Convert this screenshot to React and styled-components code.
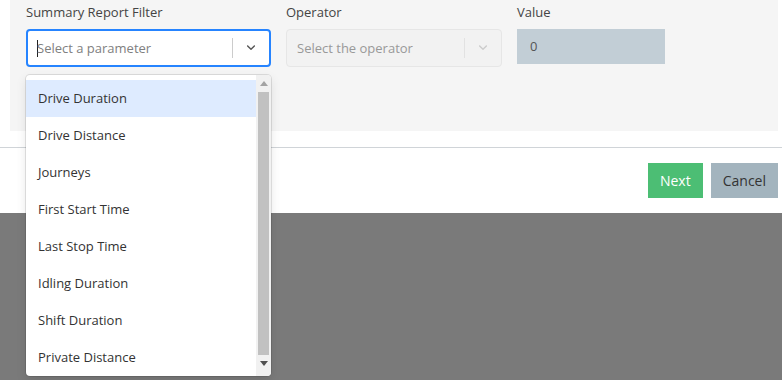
import React from 'react'
import styled, { createGlobalStyle } from 'styled-components'

const Global = createGlobalStyle`
  html, body { margin: 0; padding: 0; }
  body {
    font-family: "Open Sans", "Noto Sans", sans-serif;
    background: #7a7a7a;
  }
  * { box-sizing: border-box; }
`

const options = [
  'Drive Duration',
  'Drive Distance',
  'Journeys',
  'First Start Time',
  'Last Stop Time',
  'Idling Duration',
  'Shift Duration',
  'Private Distance',
]

const Chevron = ({ color }) => (
  <svg width="14" height="14" viewBox="0 0 20 20">
    <path
      fill={color}
      d="M4.5 6.3c.4-.4 1-.4 1.4 0L10 10.4l4.1-4.1c.4-.4 1-.4 1.4 0 .4.4.4 1 0 1.4l-4.8 4.8c-.4.4-1 .4-1.4 0L4.5 7.7c-.4-.4-.4-1 0-1.4z"
    />
  </svg>
)

const App = () => {
  return (
    <>
      <Global />
      <Page>
        <Modal>
          <Body>
            <Panel>
              <Field width={245}>
                <Label>Summary Report Filter</Label>
                <SelectBox focused>
                  <Placeholder>
                    <Caret />
                    Select a parameter
                  </Placeholder>
                  <Separator />
                  <Indicator>
                    <Chevron color="#555" />
                  </Indicator>
                </SelectBox>
                <Menu>
                  <MenuList>
                    {options.map((o, i) => (
                      <Option key={o} active={i === 0}>{o}</Option>
                    ))}
                  </MenuList>
                  <ScrollTrack>
                    <Arrow>
                      <svg width="8" height="5" viewBox="0 0 8 5"><path d="M0 5 L4 0 L8 5 Z" fill="#a3a3a3" /></svg>
                    </Arrow>
                    <Thumb />
                    <Arrow>
                      <svg width="8" height="5" viewBox="0 0 8 5"><path d="M0 0 L8 0 L4 5 Z" fill="#505050" /></svg>
                    </Arrow>
                  </ScrollTrack>
                </Menu>
              </Field>
              <Field width={216}>
                <Label>Operator</Label>
                <SelectBox disabled>
                  <Placeholder disabled>Select the operator</Placeholder>
                  <Separator disabled />
                  <Indicator>
                    <Chevron color="#cccccc" />
                  </Indicator>
                </SelectBox>
              </Field>
              <Field width={148}>
                <Label>Value</Label>
                <ValueInput>0</ValueInput>
              </Field>
            </Panel>
          </Body>
          <Footer>
            <Button kind="primary">Next</Button>
            <Button>Cancel</Button>
          </Footer>
        </Modal>
        <Backdrop />
      </Page>
    </>
  )
}

const Page = styled.div`
  width: 782px;
  height: 380px;
  display: flex;
  flex-direction: column;
  position: relative;
`

const Modal = styled.div`
  width: 782px;
  background: #fff;
  position: relative;
  z-index: 2;
`

const Backdrop = styled.div`
  flex: 1;
  background: #7a7a7a;
  position: relative;
  z-index: 1;
`

const Body = styled.div`
  padding: 0 4px 16px 10px;
`

const Panel = styled.div`
  background: #f5f5f5;
  height: 131px;
  padding: 3px 16px 0;
  display: flex;
  gap: 15px;
`

const Field = styled.div`
  width: ${p => p.width}px;
  position: relative;
`

const Label = styled.div`
  font-size: 13px;
  color: #444;
  line-height: 18px;
  height: 26px;
`

const SelectBox = styled.div`
  height: 38px;
  display: flex;
  align-items: center;
  border-radius: 4px;
  background: ${p => (p.disabled ? '#f2f2f2' : '#fff')};
  border: ${p => (p.focused ? '2px solid #2684ff' : '1px solid #e6e6e6')};
  padding-left: ${p => (p.focused ? '9px' : '10px')};
`

const Placeholder = styled.div`
  flex: 1;
  display: flex;
  align-items: center;
  font-size: 13px;
  color: ${p => (p.disabled ? '#999' : '#808080')};
`

const Caret = styled.span`
  display: inline-block;
  width: 1px;
  height: 17px;
  background: #222;
  margin-right: -1px;
`

const Separator = styled.span`
  width: 1px;
  height: 20px;
  background: ${p => (p.disabled ? '#e2e2e2' : '#ccc')};
`

const Indicator = styled.div`
  width: 36px;
  display: flex;
  justify-content: center;
  align-items: center;
`

const Menu = styled.div`
  position: absolute;
  top: 72px;
  left: 0;
  width: 245px;
  height: 301px;
  background: #fff;
  border-radius: 4px;
  box-shadow: 0 0 0 1px rgba(0, 0, 0, 0.1), 0 4px 11px rgba(0, 0, 0, 0.1);
  display: flex;
  overflow: hidden;
  z-index: 5;
`

const MenuList = styled.div`
  flex: 1;
  padding-top: 5px;
`

const Option = styled.div`
  height: 37px;
  line-height: 37px;
  padding-left: 12px;
  font-size: 13px;
  color: #333;
  background: ${p => (p.active ? '#deebff' : 'transparent')};
`

const ScrollTrack = styled.div`
  width: 15px;
  background: #f1f1f1;
  display: flex;
  flex-direction: column;
  align-items: center;
`

const Arrow = styled.div`
  height: 17px;
  display: flex;
  align-items: center;
  justify-content: center;
`

const Thumb = styled.div`
  width: 11px;
  height: 263px;
  background: #c1c1c1;
`

const ValueInput = styled.div`
  height: 35px;
  background: #c2ced6;
  font-size: 13px;
  color: #555;
  line-height: 35px;
  padding-left: 13px;
`

const Footer = styled.div`
  border-top: 1px solid #d0d4d8;
  height: 66px;
  display: flex;
  justify-content: flex-end;
  align-items: flex-start;
  gap: 8px;
  padding: 15px 4px 0 0;
`

const Button = styled.button`
  height: 35px;
  border: none;
  padding: 0 12px;
  font-family: inherit;
  font-size: 14px;
  background: ${p => (p.kind === 'primary' ? '#4cbe74' : '#a3b4be')};
  color: ${p => (p.kind === 'primary' ? '#fff' : '#333')};
`

export default App
